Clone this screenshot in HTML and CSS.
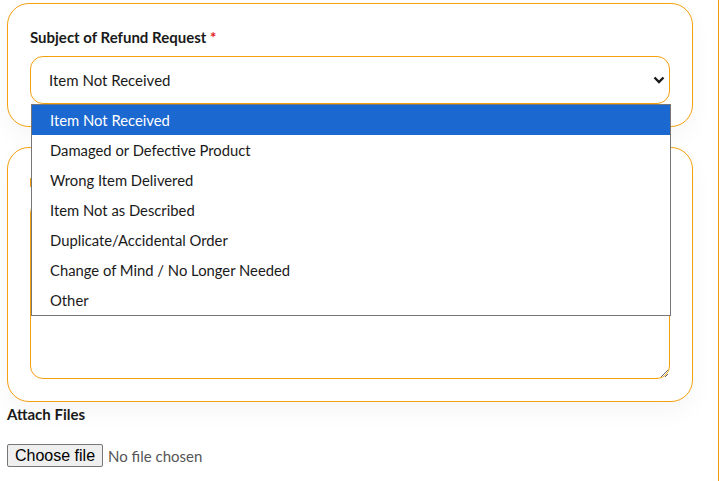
FILE: index.html
```html
<!DOCTYPE html>
<html lang="en">
<head>
    <meta charset="UTF-8">
    <meta name="viewport" content="width=device-width, initial-scale=1.0">
    <title>Refund Request</title>
    <link rel="stylesheet" href="styles.css">
</head>
<body>
    <div class="page">
        <div class="card">
            <label class="field-label" for="subject">Subject of Refund Request <span class="req">*</span></label>
            <div class="select-wrap">
                <select id="subject" class="field-select">
                    <option>Item Not Received</option>
                    <option>Damaged or Defective Product</option>
                    <option>Wrong Item Delivered</option>
                    <option>Item Not as Described</option>
                    <option>Duplicate/Accidental Order</option>
                    <option>Change of Mind / No Longer Needed</option>
                    <option>Other</option>
                </select>
                <svg class="chevron" width="12" height="8" viewBox="0 0 12 8">
                    <polyline points="1.5,1.5 6,6 10.5,1.5" fill="none" stroke="#1a1a1a" stroke-width="2.4"/>
                </svg>

                <!-- open dropdown list -->
                <ul class="select-menu">
                    <li class="active">Item Not Received</li>
                    <li>Damaged or Defective Product</li>
                    <li>Wrong Item Delivered</li>
                    <li>Item Not as Described</li>
                    <li>Duplicate/Accidental Order</li>
                    <li>Change of Mind / No Longer Needed</li>
                    <li>Other</li>
                </ul>
            </div>
        </div>

        <div class="card">
            <!-- label sits under the open list, only its edge shows -->
            <div class="label-mark"></div>
            <textarea id="details" class="field-textarea"></textarea>
        </div>

        <div class="attach-label">Attach Files</div>
        <div class="file-row">
            <label class="file-btn" for="files">Choose file</label>
            <span class="file-name">No file chosen</span>
            <input type="file" id="files" class="file-input">
        </div>
    </div>
</body>
</html>
```

FILE: styles.css
```css
body {
    margin: 0;
    font-family: Lato, "Open Sans", sans-serif;
    color: #1a1a1a;
    background-color: #fff;
}

.page {
    width: 719px;
    min-height: 100vh;
    padding: 3px 0 0 7px;
    border-right: 1px solid #f59e0b;
    box-sizing: border-box;
}

.card {
    width: 686px;
    box-sizing: border-box;
    padding: 23px 22px 22px;
    border: 1px solid #f5a00f;
    border-radius: 22px;
    background-color: #fff;
    box-shadow: 0 10px 24px rgba(0, 0, 0, 0.04);
}

.card + .card {
    margin-top: 20px;
}

.field-label {
    display: block;
    font-size: 15px;
    font-weight: 700;
    line-height: 20px;
    margin-bottom: 9px;
}

.label-mark {
    width: 1px;
    height: 9px;
    margin: 7px 0 13px;
    background-color: #f5a00f;
}

.req {
    color: #e11d1d;
}

.select-wrap {
    position: relative;
}

.field-select {
    display: block;
    width: 100%;
    height: 48px;
    padding: 0 18px;
    border: 1px solid #f5a00f;
    border-radius: 13px;
    background-color: #fff;
    font-family: inherit;
    font-size: 15px;
    color: #1a1a1a;
    appearance: none;
    outline: none;
}

.chevron {
    position: absolute;
    right: 5px;
    top: 20px;
}

.select-menu {
    position: absolute;
    z-index: 10;
    top: 48px;
    left: 1px;
    width: 640px;
    box-sizing: border-box;
    margin: 0;
    padding: 0;
    list-style: none;
    background-color: #fff;
    border: 1px solid #767676;
}

.select-menu li {
    height: 30px;
    line-height: 30px;
    padding-left: 18px;
    font-size: 14.8px;
    color: #1a1a1a;
}

.select-menu li.active {
    background-color: #1b68d0;
    color: #fff;
}

.field-textarea {
    display: block;
    width: 100%;
    height: 179px;
    box-sizing: border-box;
    border: 1px solid #f5a00f;
    border-radius: 13px;
    resize: vertical;
    font-family: inherit;
    outline: none;
}

.attach-label {
    font-size: 15px;
    font-weight: 700;
    line-height: 25px;
    margin-bottom: 17px;
}

.file-row {
    display: flex;
    align-items: center;
    gap: 5px;
}

.file-btn {
    height: 23px;
    box-sizing: border-box;
    padding: 0 7px;
    border: 1px solid #767676;
    border-radius: 2px;
    background-color: #efefef;
    font-family: "Liberation Sans", Arial, sans-serif;
    font-size: 16px;
    line-height: 21px;
    color: #000;
}

.file-name {
    font-size: 15px;
    color: #555;
}

.file-input {
    display: none;
}
```
